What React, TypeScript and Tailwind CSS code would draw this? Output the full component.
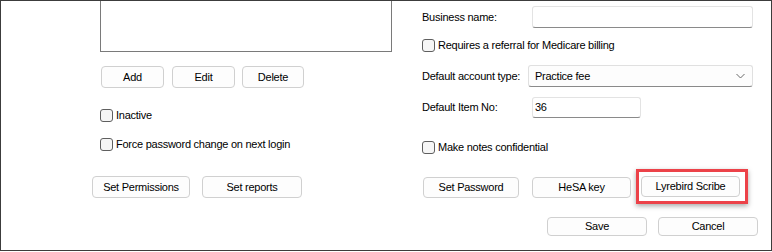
import React from 'react';

const font = { fontFamily: '"Liberation Sans", Arial, sans-serif' };

function Btn({ label, className = '' }: { label: string; className?: string }) {
  return (
    <button
      type="button"
      className={`flex items-center justify-center whitespace-nowrap rounded-[4px] border border-[#d0d0d0] bg-[#fdfdfd] text-[11px] tracking-[-0.25px] text-black ${className}`}
    >
      {label}
    </button>
  );
}

function Check({ label, className = '' }: { label: string; className?: string }) {
  return (
    <label className={`flex h-[13px] items-center ${className}`}>
      <span className="h-[13px] w-[13px] shrink-0 rounded-[3px] border border-[#5f5f5f] bg-[#f6f6f6]" />
      <span className="ml-[3px] whitespace-nowrap text-[11px] tracking-[-0.25px] text-black">{label}</span>
    </label>
  );
}

export default function App() {
  return (
    <div
      style={font}
      className="flex h-[251px] w-[772px] border border-[#3c3c3c] bg-white text-[11px] tracking-[-0.25px] text-black"
    >
      {/* left column */}
      <div className="flex w-[421px] shrink-0 flex-col pl-[91px]">
        <div className="ml-[8px] h-[51px] w-[292px] border-x border-b border-[#7a7a7a]" />
        <div className="ml-[9px] mt-[14px] flex h-[22px] gap-[8px]">
          <Btn label="Add" className="w-[63px]" />
          <Btn label="Edit" className="w-[63px]" />
          <Btn label="Delete" className="ml-[-1px] w-[62px]" />
        </div>
        <Check label="Inactive" className="ml-[8px] mt-[21px]" />
        <Check label="Force password change on next login" className="ml-[8px] mt-[16px]" />
        <div className="mt-[25px] flex h-[22px] gap-[12px]">
          <Btn label="Set Permissions" className="w-[98px]" />
          <Btn label="Set reports" className="w-[100px]" />
        </div>
      </div>

      {/* right column */}
      <div className="flex flex-1 flex-col">
        <div className="mt-[5px] flex h-[22px] items-center">
          <span className="w-[110px] whitespace-nowrap">Business name:</span>
          <div className="h-[22px] w-[221px] rounded-[3px] border border-[#e3e3e3] border-b-[#8a8a8a] bg-white" />
        </div>
        <Check label="Requires a referral for Medicare billing" className="mt-[11px]" />
        <div className="mt-[13px] flex h-[22px] items-center">
          <span className="w-[106px] whitespace-nowrap">Default account type:</span>
          <div className="flex h-[22px] w-[225px] items-center justify-between rounded-[3px] border border-[#e0e0e0] border-b-[#8a8a8a] bg-[#fdfdfd] pl-[6px] pr-[7px]">
            <span>Practice fee</span>
            <svg width="9" height="6" viewBox="0 0 9 6" fill="none">
              <path d="M0.5 1L4.5 5L8.5 1" stroke="#6b6b6b" strokeWidth="1" />
            </svg>
          </div>
        </div>
        <div className="mt-[10px] flex h-[21px] items-center">
          <span className="w-[110px] whitespace-nowrap">Default Item No:</span>
          <div className="flex h-[21px] w-[109px] items-center rounded-[3px] border border-[#e3e3e3] border-b-[#8a8a8a] bg-white pl-[2px]">
            36
          </div>
        </div>
        <Check label="Make notes confidential" className="mt-[23px]" />
        <div className="mt-[23px] flex h-[21px]">
          <Btn label="Set Password" className="ml-[1px] w-[96px]" />
          <Btn label="HeSA key" className="ml-[13px] w-[99px]" />
          <div className="relative ml-[10px] -mt-[1px] flex">
            <Btn label="Lyrebird Scribe" className="h-[21px] w-[99px]" />
            <span className="pointer-events-none absolute -bottom-[6px] -left-[5px] -right-[8px] -top-[7px] border-[3px] border-[#ec4249] shadow-[0_2px_5px_rgba(0,0,0,0.35)]" />
          </div>
        </div>
        <div className="ml-[125px] mt-[19px] flex h-[19px] gap-[11px]">
          <Btn label="Save" className="w-[100px] border-[#1a6fc4]" />
          <Btn label="Cancel" className="w-[100px]" />
        </div>
      </div>
    </div>
  );
}
